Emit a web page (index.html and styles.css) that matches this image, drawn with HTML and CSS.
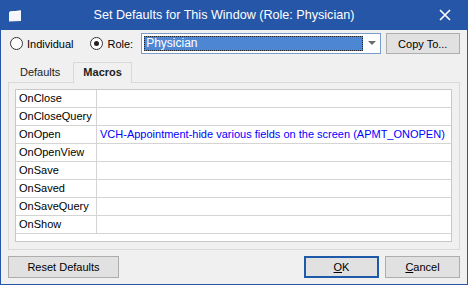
FILE: index.html
```html
<!DOCTYPE html>
<html lang="en">
  <head>
    <meta charset="UTF-8" />
    <title>Set Defaults for This Window</title>
    <link rel="stylesheet" href="styles.css">
  </head>
  <body>
    <div class="window">
      <div class="titlebar">
        <div class="app-icon">
          <svg width="14" height="12" viewBox="0 0 14 12">
            <path d="M2 1.5 L13 0.5 L13 11 L1 11.5 L1 3 Z" fill="#f4f6fb" />
            <path d="M1 3 L2 1.5 L13 0.5 L13 2 Z" fill="#ffffff" />
          </svg>
        </div>
        <div class="title">Set Defaults for This Window (Role: Physician)</div>
        <div class="close-btn">
          <svg width="12" height="12" viewBox="0 0 12 12">
            <path d="M1 1 L11 11 M11 1 L1 11" stroke="#fff" stroke-width="1.6" />
          </svg>
        </div>
      </div>

      <div class="content">
        <div class="scope-row">
          <label class="radio"><span class="radio-dot"></span>Individual</label>
          <label class="radio checked"><span class="radio-dot"></span>Role:</label>
          <div class="combo">
            <div class="combo-value"><span>Physician</span></div>
            <div class="combo-arrow"></div>
          </div>
          <button class="btn copy-btn">Copy To...</button>
        </div>

        <div class="tabs">
          <div class="tab">Defaults</div>
          <div class="tab active">Macros</div>
        </div>
        <div class="tab-panel">
          <div class="macro-grid">
            <div class="macro-row"><div class="macro-name">OnClose</div><div class="macro-value"></div></div>
            <div class="macro-row"><div class="macro-name">OnCloseQuery</div><div class="macro-value"></div></div>
            <div class="macro-row"><div class="macro-name">OnOpen</div><div class="macro-value">VCH-Appointment-hide various fields on the screen (APMT_ONOPEN)</div></div>
            <div class="macro-row"><div class="macro-name">OnOpenView</div><div class="macro-value"></div></div>
            <div class="macro-row"><div class="macro-name">OnSave</div><div class="macro-value"></div></div>
            <div class="macro-row"><div class="macro-name">OnSaved</div><div class="macro-value"></div></div>
            <div class="macro-row"><div class="macro-name">OnSaveQuery</div><div class="macro-value"></div></div>
            <div class="macro-row"><div class="macro-name">OnShow</div><div class="macro-value"></div></div>
          </div>
        </div>

        <div class="footer">
          <button class="btn reset-btn">Reset Defaults</button>
          <div class="footer-right">
            <button class="btn ok-btn"><u>O</u>K</button>
            <button class="btn"><u>C</u>ancel</button>
          </div>
        </div>
      </div>
    </div>
  </body>
</html>
```

FILE: styles.css
```css
body {
  margin: 0;
  font-family: "Liberation Sans", Arial, sans-serif;
  font-size: 11px;
  color: #000;
  background: #f0f0f0;
}
.window {
  width: 468px;
  height: 285px;
  box-sizing: border-box;
  border: 1px solid #2656a8;
  border-top: none;
  background: #f0f0f0;
}
.titlebar {
  height: 30px;
  margin: 0 -1px;
  background: #2656a8;
  color: #fff;
  display: flex;
  align-items: center;
}
.app-icon {
  width: 30px;
  flex-shrink: 0;
  display: flex;
  justify-content: center;
  padding-top: 1px;
}
.title {
  flex: 1;
  text-align: center;
  font-size: 12.6px;
  padding-right: 4px;
  padding-bottom: 1px;
  white-space: nowrap;
}
.close-btn {
  width: 46px;
  flex-shrink: 0;
  height: 30px;
  display: flex;
  align-items: center;
  justify-content: center;
}
.content {
  padding: 3px 7px 0;
}
.scope-row {
  display: flex;
  align-items: center;
  height: 21px;
}
.radio {
  display: flex;
  align-items: center;
  margin-left: 2px;
  margin-right: 17px;
}
.radio + .radio {
  margin-left: 0;
  margin-right: 8px;
}
.radio-dot {
  width: 11px;
  height: 11px;
  border: 1px solid #333;
  border-radius: 50%;
  background: #fff;
  margin-right: 4px;
  display: flex;
  align-items: center;
  justify-content: center;
}
.radio.checked .radio-dot::after {
  content: "";
  width: 5px;
  height: 5px;
  border-radius: 50%;
  background: #222;
}
.combo {
  width: 241px;
  height: 21px;
  box-sizing: border-box;
  border: 1px solid #7a9cc8;
  background: #fff;
  display: flex;
  align-items: stretch;
  margin-right: 5px;
}
.combo-value {
  flex: 1;
  padding: 2px 0 2px 2px;
  display: flex;
}
.combo-value span {
  flex: 1;
  background: #4d86d3;
  color: #fff;
  outline: 1px dotted #222;
  outline-offset: -1px;
  padding-left: 2px;
  line-height: 15px;
  font-size: 12px;
}
.combo-arrow {
  width: 17px;
  position: relative;
}
.combo-arrow::after {
  content: "";
  position: absolute;
  left: 5px;
  top: 7px;
  border-left: 4px solid transparent;
  border-right: 4px solid transparent;
  border-top: 4px solid #6d6d6d;
}
.btn {
  font-family: inherit;
  font-size: 11px;
  color: #000;
  background: #e1e1e1;
  border: 1px solid #adadad;
  height: 22px;
  width: 75px;
  padding: 0;
  box-sizing: border-box;
}
.copy-btn {
  height: 21px;
}
.tabs {
  display: flex;
  align-items: flex-end;
  height: 22px;
  margin-top: 6px;
  padding-left: 2px;
}
.tab {
  height: 18px;
  line-height: 17px;
  padding: 0 13px 0 10px;
  color: #222;
}
.tab.active {
  height: 20px;
  line-height: 19px;
  font-weight: bold;
  border: 1px solid #d9d9d9;
  border-bottom: none;
  padding: 0 8px 0 9px;
  margin-bottom: -1px;
  position: relative;
  background: #f0f0f0;
  width: 40px;
}
.tab-panel {
  border: 1px solid #d9d9d9;
  height: 168px;
  box-sizing: border-box;
  padding: 6px 7px 7px 6px;
}
.macro-grid {
  height: 100%;
  box-sizing: border-box;
  border: 1px solid #c8c8c8;
  background: #fff;
}
.macro-row {
  display: flex;
  height: 18px;
  box-sizing: border-box;
  border-bottom: 1px solid #d4d4d4;
}
.macro-name {
  width: 81px;
  flex-shrink: 0;
  box-sizing: border-box;
  border-right: 1px solid #d4d4d4;
  padding-left: 3px;
  line-height: 17px;
}
.macro-value {
  flex: 1;
  padding-left: 3px;
  line-height: 17px;
  color: #0000ff;
  white-space: nowrap;
  overflow: hidden;
}
.footer {
  display: flex;
  justify-content: space-between;
  margin-top: 6px;
}
.reset-btn {
  width: 111px;
}
.footer-right {
  display: flex;
  gap: 6px;
}
.ok-btn {
  border: 2px solid #1f5aa8;
}
```
